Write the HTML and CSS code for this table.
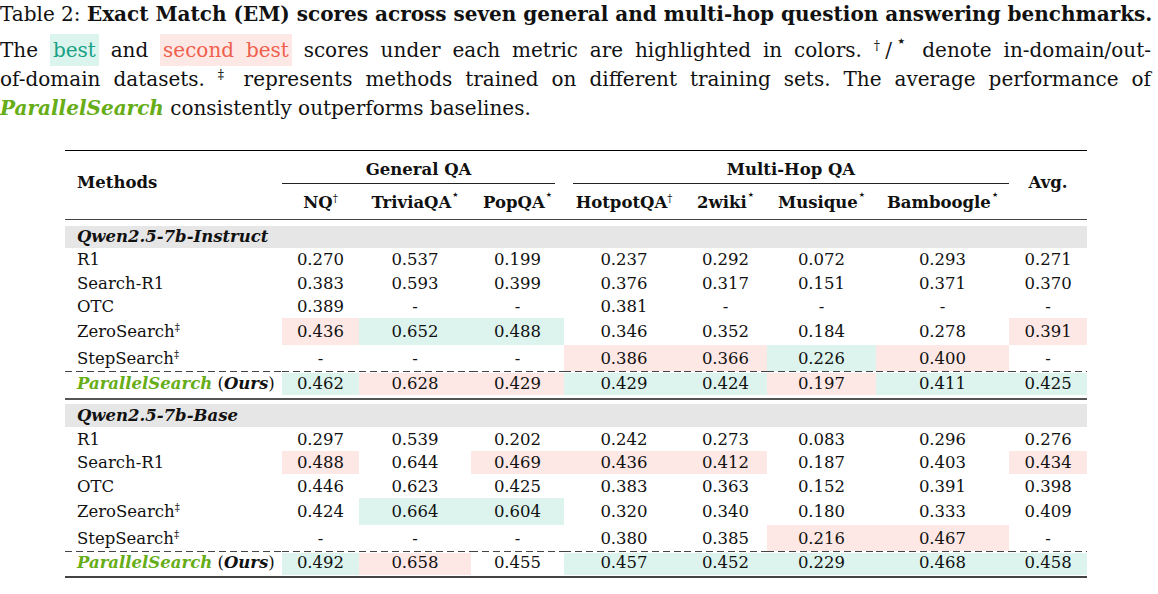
FILE: index.html
```html
<!DOCTYPE html>
<html lang="en">
<head>
<meta charset="utf-8">
<title>Table 2</title>
<link rel="stylesheet" href="styles.css">
</head>
<body>
<div class="caption">
  <div class="line l1"><span>Table 2:</span> <b>Exact Match (EM) scores across seven general and multi-hop question answering benchmarks.</b></div>
  <div class="line"><span>The</span> <span class="hl best">best</span> <span>and</span> <span class="hl second">second best</span> scores under each metric are highlighted in colors. <sup>†</sup>/<sup class="star">★</sup> denote in-domain/out-</div>
  <div class="line">of-domain datasets. <sup>‡</sup> represents methods trained on different training sets. The average performance of</div>
  <div class="line last"><b><i class="ps">ParallelSearch</i></b> consistently outperforms baselines.</div>
</div>

<table class="results">
  <colgroup>
    <col class="c-m"><col class="c-nq"><col class="c-tq"><col class="c-pq"><col class="c-hq"><col class="c-2w"><col class="c-mu"><col class="c-ba"><col class="c-av">
  </colgroup>
  <thead>
    <tr class="h1">
      <th rowspan="2" class="methods">Methods</th>
      <th colspan="3" class="grp"><div class="cmid gen">General QA</div></th>
      <th colspan="4" class="grp"><div class="cmid mh">Multi-Hop QA</div></th>
      <th rowspan="2" class="avg">Avg.</th>
    </tr>
    <tr class="h2">
      <th>NQ<sup>†</sup></th>
      <th>TriviaQA<sup class="star">★</sup></th>
      <th>PopQA<sup class="star">★</sup></th>
      <th>HotpotQA<sup>†</sup></th>
      <th>2wiki<sup class="star">★</sup></th>
      <th>Musique<sup class="star">★</sup></th>
      <th>Bamboogle<sup class="star">★</sup></th>
    </tr>
  </thead>
  <tbody class="g1">
    <tr class="group"><td colspan="9">Qwen2.5-7b-Instruct</td></tr>
    <tr class="r-a"><td>R1</td><td>0.270</td><td>0.537</td><td>0.199</td><td>0.237</td><td>0.292</td><td>0.072</td><td>0.293</td><td>0.271</td></tr>
    <tr class="r-b"><td>Search-R1</td><td>0.383</td><td>0.593</td><td>0.399</td><td>0.376</td><td>0.317</td><td>0.151</td><td>0.371</td><td>0.370</td></tr>
    <tr class="r-a"><td>OTC</td><td>0.389</td><td>-</td><td>-</td><td>0.381</td><td>-</td><td>-</td><td>-</td><td>-</td></tr>
    <tr class="r-sup"><td>ZeroSearch<sup>‡</sup></td><td class="r">0.436</td><td class="g">0.652</td><td class="g">0.488</td><td>0.346</td><td>0.352</td><td>0.184</td><td>0.278</td><td class="r">0.391</td></tr>
    <tr class="r-sup2"><td>StepSearch<sup>‡</sup></td><td>-</td><td>-</td><td>-</td><td class="r">0.386</td><td class="r">0.366</td><td class="g">0.226</td><td class="r">0.400</td><td>-</td></tr>
    <tr class="ours"><td><b><i class="ps">ParallelSearch</i></b> (<b><i>Ours</i></b>)</td><td class="g">0.462</td><td class="r">0.628</td><td class="r">0.429</td><td class="g">0.429</td><td class="g">0.424</td><td class="r">0.197</td><td class="g">0.411</td><td class="g">0.425</td></tr>
  </tbody>
  <tbody class="g2">
    <tr class="group"><td colspan="9">Qwen2.5-7b-Base</td></tr>
    <tr class="r-b"><td>R1</td><td>0.297</td><td>0.539</td><td>0.202</td><td>0.242</td><td>0.273</td><td>0.083</td><td>0.296</td><td>0.276</td></tr>
    <tr class="r-a"><td>Search-R1</td><td class="r">0.488</td><td>0.644</td><td class="r">0.469</td><td class="r">0.436</td><td class="r">0.412</td><td>0.187</td><td>0.403</td><td class="r">0.434</td></tr>
    <tr class="r-b"><td>OTC</td><td>0.446</td><td>0.623</td><td>0.425</td><td>0.383</td><td>0.363</td><td>0.152</td><td>0.391</td><td>0.398</td></tr>
    <tr class="r-sup"><td>ZeroSearch<sup>‡</sup></td><td>0.424</td><td class="g">0.664</td><td class="g">0.604</td><td>0.320</td><td>0.340</td><td>0.180</td><td>0.333</td><td>0.409</td></tr>
    <tr class="r-sup2"><td>StepSearch<sup>‡</sup></td><td>-</td><td>-</td><td>-</td><td>0.380</td><td>0.385</td><td class="r">0.216</td><td class="r">0.467</td><td>-</td></tr>
    <tr class="ours"><td><b><i class="ps">ParallelSearch</i></b> (<b><i>Ours</i></b>)</td><td class="g">0.492</td><td class="r">0.658</td><td>0.455</td><td class="g">0.457</td><td class="g">0.452</td><td class="g">0.229</td><td class="g">0.468</td><td class="g">0.458</td></tr>
  </tbody>
</table>
</body>
</html>
```

FILE: styles.css
```css
html, body {
  margin: 0;
  padding: 0;
  background: #ffffff;
}

body {
  font-family: "DejaVu Serif", "Liberation Serif", serif;
  color: #111111;
}

.caption {
  width: 1151px;
  font-size: 20px;
  line-height: 29px;
}

.line {
  white-space: nowrap;
  text-align: justify;
  text-align-last: justify;
}

.line.l1 {
  margin-bottom: 7px;
}

.line.last {
  text-align: left;
  text-align-last: left;
}

.caption sup {
  font-size: 0.62em;
  line-height: 0;
  vertical-align: 0.55em;
}

.caption sup.star {
  font-family: "DejaVu Sans", sans-serif;
  font-size: 0.42em;
  vertical-align: 1.5em;
}

.hl {
  padding: 4px 3px;
}

.best {
  color: #17a184;
  background: #dcf4ee;
}

.second {
  color: #ef5f4c;
  background: #fde8e6;
}

.ps {
  color: #66ad17;
}

/* ---------- table ---------- */

.results {
  margin: 27px 0 0 65px;
  border-collapse: separate;
  border-spacing: 0;
  table-layout: fixed;
  width: 1022px;
  font-size: 16.5px;
}

.c-m  { width: 217px; }
.c-nq { width: 77px; }
.c-tq { width: 112px; }
.c-pq { width: 93px; }
.c-hq { width: 120px; }
.c-2w { width: 83px; }
.c-mu { width: 109px; }
.c-ba { width: 133px; }
.c-av { width: 78px; }

.results th,
.results td {
  padding: 0;
  text-align: center;
  vertical-align: middle;
  white-space: nowrap;
}

.results th {
  font-weight: bold;
}

.results sup {
  font-size: 0.62em;
  line-height: 0;
  vertical-align: 0.6em;
  font-weight: normal;
}

.results sup.star {
  font-family: "DejaVu Sans", sans-serif;
  font-size: 0.42em;
  vertical-align: 1.45em;
  margin-left: 1px;
}

.results td:first-child,
.results th.methods {
  text-align: left;
  padding-left: 12px;
}

.h1 th {
  border-top: 1.5px solid #000000;
  height: 33px;
}

.h1 th.grp {
  vertical-align: bottom;
}

.cmid {
  line-height: 22px;
  padding-bottom: 2px;
  border-bottom: 1.3px solid #222222;
}

.cmid.gen {
  margin-right: 9px;
}

.cmid.mh {
  margin-left: 9px;
}

.h2 th {
  height: 34px;
  padding-top: 1px;
}

.h2 th,
th.methods,
th.avg {
  border-bottom: 1px solid #444444;
}

th.methods,
th.avg {
  padding-bottom: 5px;
}

.group td {
  text-align: left;
  vertical-align: bottom;
  font-weight: bold;
  font-style: italic;
  line-height: 22px;
  background-image: linear-gradient(#e6e6e6, #e6e6e6);
  background-repeat: no-repeat;
  background-position: left bottom;
  background-size: 100% 22px;
}

.g1 .group td {
  height: 28px;
}

.g2 .group td {
  height: 27px;
  background-size: 100% 23px;
}

.r-a td { height: 23px; }
.r-b td { height: 24px; }
.r-sup td { height: 27px; }
.r-sup2 td { height: 26px; }

td.g {
  background-color: #ddf4ee;
}

td.r {
  background-color: #fde8e6;
}

tr.ours td {
  background-color: transparent;
  background-image:
    repeating-linear-gradient(90deg, #444444 0 7px, transparent 7px 11px),
    linear-gradient(var(--hl, transparent), var(--hl, transparent));
  background-repeat: no-repeat;
  background-position: left top, left 2px;
  background-size: 100% 1px, 100% 22px;
  padding-bottom: 3px;
}

tr.ours td.g {
  --hl: #ddf4ee;
}

tr.ours td.r {
  --hl: #fde8e6;
}

.g1 tr.ours td {
  height: 24px;
  border-bottom: 2px solid #555555;
}

.g2 tr.ours td {
  height: 23px;
  padding-bottom: 2px;
  border-bottom: 2px solid #444444;
}
```
